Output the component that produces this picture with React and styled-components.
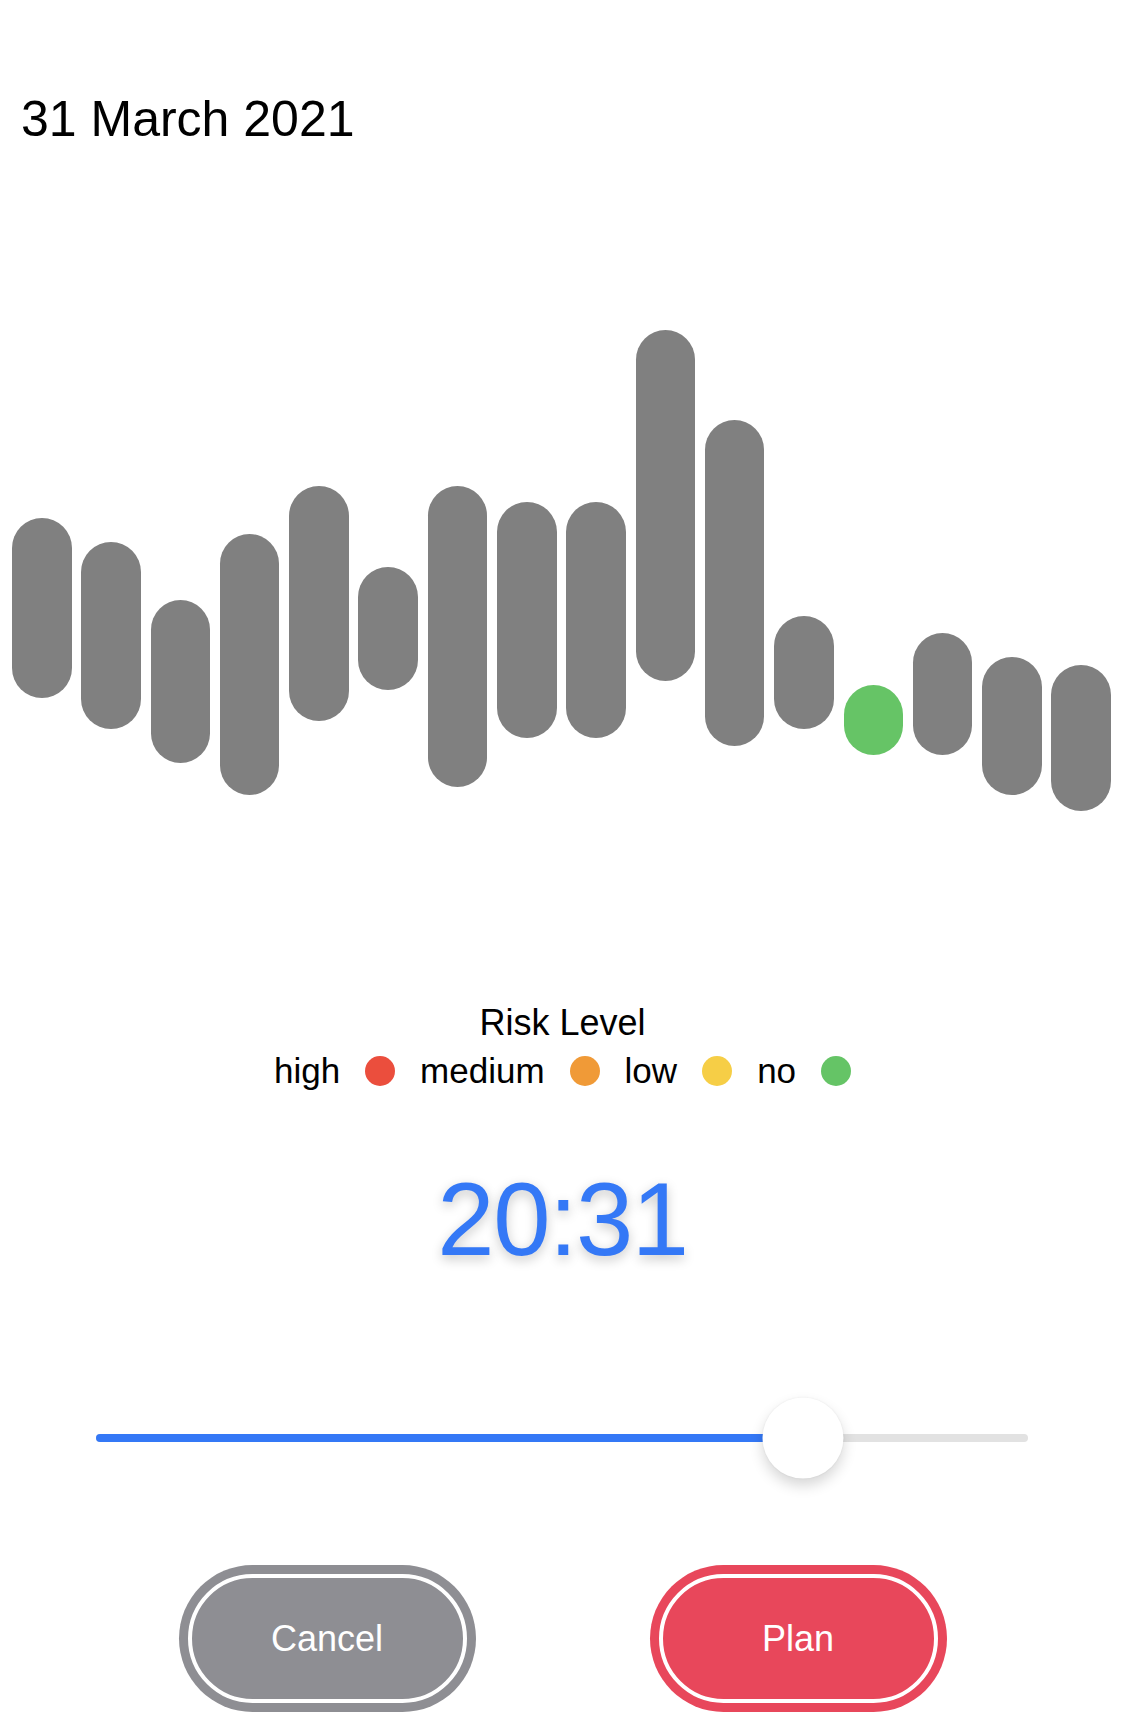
import React from "react";
import styled, { createGlobalStyle } from "styled-components";

const GlobalStyle = createGlobalStyle`
  html, body {
    margin: 0;
    padding: 0;
    background: #ffffff;
  }
  body {
    font-family: "Liberation Sans", Arial, sans-serif;
    color: #000;
  }
`;

const Page = styled.div`
  width: 1125px;
  min-height: 1736px;
  display: flex;
  flex-direction: column;
  padding-top: 90px;
  box-sizing: border-box;
  overflow: hidden;
`;

const Title = styled.h1`
  margin: 0;
  padding-left: 21px;
  font-size: 50px;
  line-height: 58px;
  font-weight: 400;
  color: #000;
`;

const Chart = styled.div`
  margin-top: 182px;
  height: 481px;
  display: flex;
  align-items: flex-start;
  gap: 9.8px;
  padding: 0 14px 0 12px;
`;

const Bar = styled.div`
  flex: 1 1 0;
  border-radius: 30px;
  background: ${(p) => (p.$active ? "#66c466" : "#808080")};
`;

const Legend = styled.div`
  margin-top: 192px;
  display: flex;
  flex-direction: column;
  align-items: center;
  gap: 8px;
`;

const LegendTitle = styled.div`
  font-size: 36px;
  line-height: 40px;
`;

const LegendRow = styled.div`
  display: flex;
  align-items: center;
  gap: 25px;
  font-size: 35px;
  line-height: 40px;
`;

const LegendLabel = styled.span``;

const Dot = styled.span`
  width: 30px;
  height: 30px;
  border-radius: 50%;
  background: ${(p) => p.$color};
`;

const Time = styled.div`
  margin-top: 77px;
  text-align: center;
  font-size: 103px;
  line-height: 103px;
  letter-spacing: -1.5px;
  color: #3478f6;
  text-shadow: 0 4px 12px rgba(0, 0, 0, 0.22);
`;

const SliderWrap = styled.div`
  margin-top: 126px;
  height: 81px;
  display: flex;
  align-items: center;
  padding: 0 97px 0 96px;
`;

const Track = styled.div`
  position: relative;
  flex: 1;
  height: 8px;
  border-radius: 4px;
  background: #e2e2e2;
`;

const Fill = styled.div`
  position: absolute;
  left: 0;
  top: 0;
  bottom: 0;
  border-radius: 4px;
  background: #3478f6;
`;

const Thumb = styled.div`
  position: absolute;
  top: 50%;
  width: 81px;
  height: 81px;
  border-radius: 50%;
  background: #fff;
  transform: translate(-50%, -50%);
  box-shadow: 0 7px 14px rgba(0, 0, 0, 0.16), 0 0 2px rgba(0, 0, 0, 0.08);
`;

const Buttons = styled.div`
  margin-top: 87px;
  display: flex;
  justify-content: center;
  gap: 174px;
`;

const Button = styled.button`
  width: 297px;
  height: 147px;
  padding: 9px;
  border: none;
  border-radius: 999px;
  background: ${(p) => p.$color};
  box-sizing: border-box;
  display: flex;
  cursor: pointer;
`;

const ButtonInner = styled.span`
  flex: 1;
  border: 4px solid #fff;
  border-radius: 999px;
  display: flex;
  align-items: center;
  justify-content: center;
  color: #fff;
  font-family: "Liberation Sans", Arial, sans-serif;
  font-size: 36px;
  line-height: 1;
`;

const bars = [
  [518, 698],
  [542, 729],
  [600, 763],
  [534, 795],
  [486, 721],
  [567, 690],
  [486, 787],
  [502, 738],
  [502, 738],
  [330, 681],
  [420, 746],
  [616, 729],
  [685, 755, true],
  [633, 755],
  [657, 795],
  [665, 811],
];

const legend = [
  ["high", "#eb4e3d"],
  ["medium", "#f09a37"],
  ["low", "#f6ce46"],
  ["no", "#65c466"],
];

const CHART_TOP = 330;
const sliderValue = 0.759;

export default function App() {
  return (
    <>
      <GlobalStyle />
      <Page>
        <Title>31 March 2021</Title>
        <Chart>
          {bars.map(([top, bottom, active], i) => (
            <Bar
              key={i}
              $active={active}
              style={{ marginTop: top - CHART_TOP, height: bottom - top }}
            />
          ))}
        </Chart>
        <Legend>
          <LegendTitle>Risk Level</LegendTitle>
          <LegendRow>
            {legend.map(([label, color]) => (
              <React.Fragment key={label}>
                <LegendLabel>{label}</LegendLabel>
                <Dot $color={color} />
              </React.Fragment>
            ))}
          </LegendRow>
        </Legend>
        <Time>20:31</Time>
        <SliderWrap>
          <Track>
            <Fill style={{ width: `${sliderValue * 100}%` }} />
            <Thumb style={{ left: `${sliderValue * 100}%` }} />
          </Track>
        </SliderWrap>
        <Buttons>
          <Button $color="#8e8e93">
            <ButtonInner>Cancel</ButtonInner>
          </Button>
          <Button $color="#e8475b">
            <ButtonInner>Plan</ButtonInner>
          </Button>
        </Buttons>
      </Page>
    </>
  );
}
